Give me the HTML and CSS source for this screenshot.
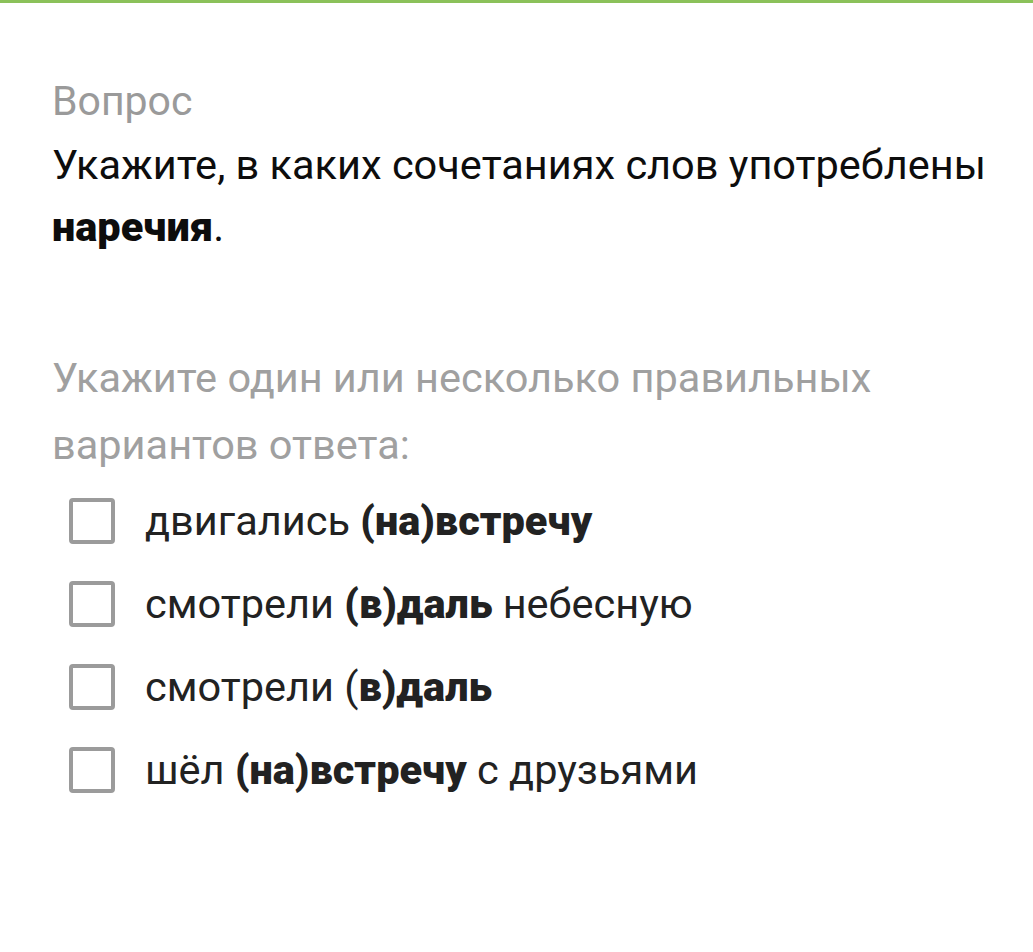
FILE: index.html
```html
<!DOCTYPE html>
<html lang="ru">
<head>
<meta charset="utf-8">
<link rel="stylesheet" href="styles.css">
</head>
<body>
<div class="topbar"></div>
<main class="content">
  <div class="label">Вопрос</div>
  <div class="question">Укажите, в каких сочетаниях слов употреблены <b>наречия</b>.</div>
  <div class="hint">Укажите один или несколько правильных вариантов ответа:</div>
  <ul class="options">
    <li class="option"><span class="box"></span><span class="text">двигались <b>(на)встречу</b></span></li>
    <li class="option"><span class="box"></span><span class="text">смотрели <b>(в)даль</b> небесную</span></li>
    <li class="option"><span class="box"></span><span class="text">смотрели (<b>в)даль</b></span></li>
    <li class="option"><span class="box"></span><span class="text">шёл <b>(на)встречу</b> с друзьями</span></li>
  </ul>
</main>
</body>
</html>
```
FILE: styles.css
```css
html, body {
  margin: 0;
  padding: 0;
  background: #ffffff;
}
body {
  font-family: Roboto, "Noto Sans", sans-serif;
}
.topbar {
  height: 3px;
  background: #8bc15a;
}
.content {
  padding: 76px 20px 0 52px;
}
.label {
  font-size: 41px;
  line-height: 44px;
  color: #9a9a9a;
}
.question {
  margin-top: 11px;
  font-size: 41.5px;
  line-height: 62px;
  color: #0d0d0d;
}
.question b {
  font-weight: 900;
}
.hint {
  margin-top: 86px;
  font-size: 41.5px;
  line-height: 67px;
  color: #a0a0a0;
  max-width: 880px;
}
.options {
  list-style: none;
  margin: 1px 0 0 0;
  padding: 0 0 0 17px;
}
.option {
  display: flex;
  align-items: center;
  height: 83px;
  gap: 30px;
  font-size: 41.5px;
  color: #222222;
}
.option b {
  font-weight: 900;
}
.box {
  width: 38px;
  height: 38px;
  border: 4px solid #9b9b9b;
  border-radius: 4px;
  flex: none;
}
```
